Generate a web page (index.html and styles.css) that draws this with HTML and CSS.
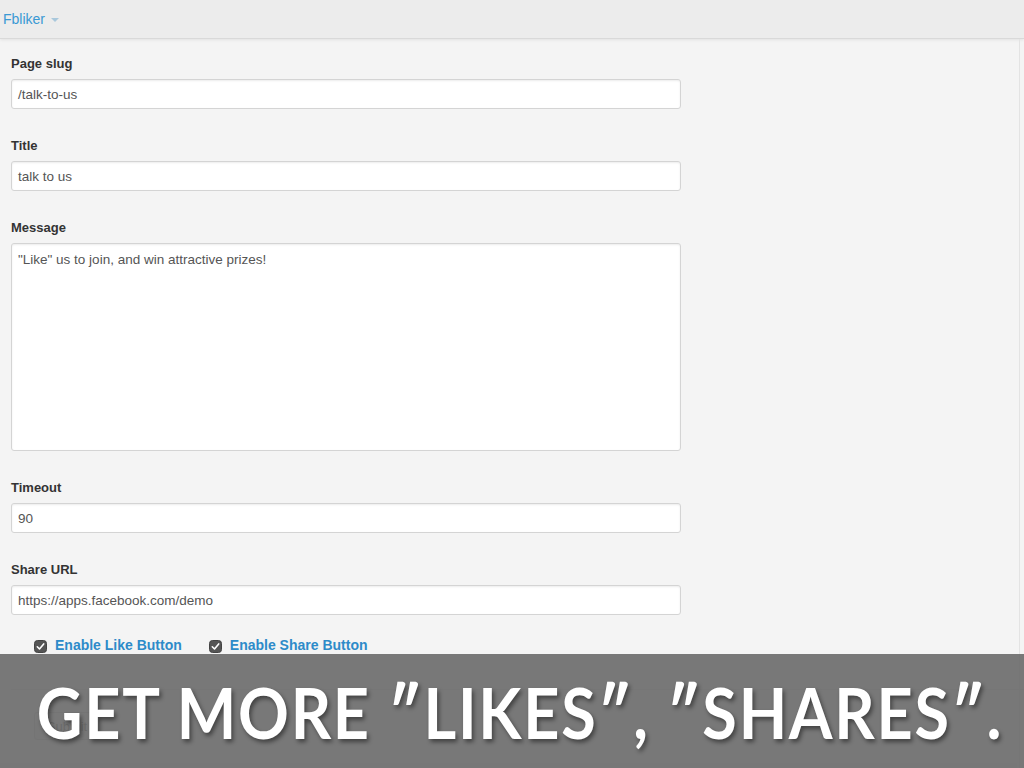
FILE: index.html
```html
<!DOCTYPE html>
<html>
<head>
<meta charset="utf-8">
<link rel="stylesheet" href="styles.css">
</head>
<body>
<header class="navbar">
  <a class="brand">Fbliker <span class="caret"></span></a>
</header>
<main class="page">
  <form class="form">
    <div class="group">
      <label class="label">Page slug</label>
      <div class="input">/talk-to-us</div>
    </div>
    <div class="group">
      <label class="label">Title</label>
      <div class="input">talk to us</div>
    </div>
    <div class="group">
      <label class="label">Message</label>
      <div class="input textarea">"Like" us to join, and win attractive prizes!</div>
    </div>
    <div class="group">
      <label class="label">Timeout</label>
      <div class="input">90</div>
    </div>
    <div class="group">
      <label class="label">Share URL</label>
      <div class="input">https://apps.facebook.com/demo</div>
    </div>
    <div class="checks">
      <span class="check">
        <svg class="cb" width="13" height="13" viewBox="0 0 13 13"><rect x="0.5" y="0.5" width="12" height="12" rx="3" fill="#555" stroke="#444"/><path d="M3.3 6.8 L5.5 9 L9.7 3.9" fill="none" stroke="#fff" stroke-width="1.6" stroke-linecap="round" stroke-linejoin="round"/></svg>
        <span class="check-text">Enable Like Button</span>
      </span>
      <span class="check">
        <svg class="cb" width="13" height="13" viewBox="0 0 13 13"><rect x="0.5" y="0.5" width="12" height="12" rx="3" fill="#555" stroke="#444"/><path d="M3.3 6.8 L5.5 9 L9.7 3.9" fill="none" stroke="#fff" stroke-width="1.6" stroke-linecap="round" stroke-linejoin="round"/></svg>
        <span class="check-text">Enable Share Button</span>
      </span>
    </div>
    <div class="actions">
      <button type="button" class="btn">Submit</button>
    </div>
  </form>
</main>
<div class="banner">
  <div class="banner-text">GET MORE ″LIKES″, ″SHARES″.</div>
</div>
</body>
</html>
```

FILE: styles.css
```css
html, body {
  margin: 0;
  padding: 0;
  height: 100%;
  overflow: hidden;
}
body {
  background: #f4f4f4;
  font-family: "Liberation Sans", Arial, sans-serif;
  color: #333;
  width: 1024px;
  height: 768px;
  position: relative;
}
.navbar {
  height: 38px;
  background: #ececec;
  border-bottom: 1px solid #d9d9d9;
  box-shadow: 0 1px 3px rgba(0,0,0,0.08);
  display: flex;
  align-items: center;
  padding-left: 3px;
}
.brand {
  color: #3a99d4;
  font-size: 14px;
  display: flex;
  align-items: center;
  gap: 6px;
}
.caret {
  display: inline-block;
  width: 0;
  height: 0;
  border-left: 4px solid transparent;
  border-right: 4px solid transparent;
  border-top: 4px solid #a9c8dc;
  margin-top: 2px;
}
.page {
  width: 1020px;
  height: 729px;
  border-right: 1px solid #e3e3e3;
  box-sizing: border-box;
}
.form {
  padding: 15px 0 0 11px;
  width: 670px;
}
.group {
  margin-bottom: 27px;
}
.label {
  display: block;
  font-weight: bold;
  font-size: 13px;
  line-height: 19px;
  color: #333;
  margin-bottom: 6px;
}
.input {
  height: 30px;
  box-sizing: border-box;
  background: #fff;
  border: 1px solid #d4d4d4;
  border-radius: 3px;
  box-shadow: inset 0 1px 2px rgba(0,0,0,0.08);
  font-size: 13.5px;
  color: #555;
  padding: 0 6px;
  line-height: 29px;
}
.textarea {
  height: 208px;
  padding-top: 3px;
  line-height: 26px;
}
.checks {
  display: flex;
  gap: 27px;
  padding-left: 23px;
  margin-top: -7px;
  height: 20px;
  align-items: center;
}
.check {
  display: flex;
  align-items: center;
  gap: 8px;
}
.cb {
  margin-top: 3px;
}
.check-text {
  color: #2d8bc9;
  font-weight: bold;
  font-size: 14px;
}
.actions {
  margin-top: 34px;
  width: 990px;
  border-top: 1px solid #e0e0e0;
  padding: 22px 0 0 23px;
}
.btn {
  width: 66px;
  height: 28px;
  border: 1px solid #c8c8c8;
  border-radius: 3px;
  background: linear-gradient(#fafafa, #e6e6e6);
  font-family: "Liberation Sans", Arial, sans-serif;
  font-size: 13px;
  color: #333;
}
.banner {
  position: absolute;
  left: 0;
  top: 654px;
  width: 1024px;
  height: 114px;
  background: rgba(110,110,110,0.93);
  display: flex;
  align-items: center;
  justify-content: center;
}
.banner-text {
  color: #fff;
  font-family: "Lato", "Open Sans", sans-serif;
  font-weight: 700;
  font-size: 63px;
  letter-spacing: 1.7px;
  white-space: nowrap;
  text-shadow: 2px 3px 4px rgba(0,0,0,0.45);
  transform: scaleY(1.12);
  margin-top: 0;
  margin-left: 16px;
}
```
